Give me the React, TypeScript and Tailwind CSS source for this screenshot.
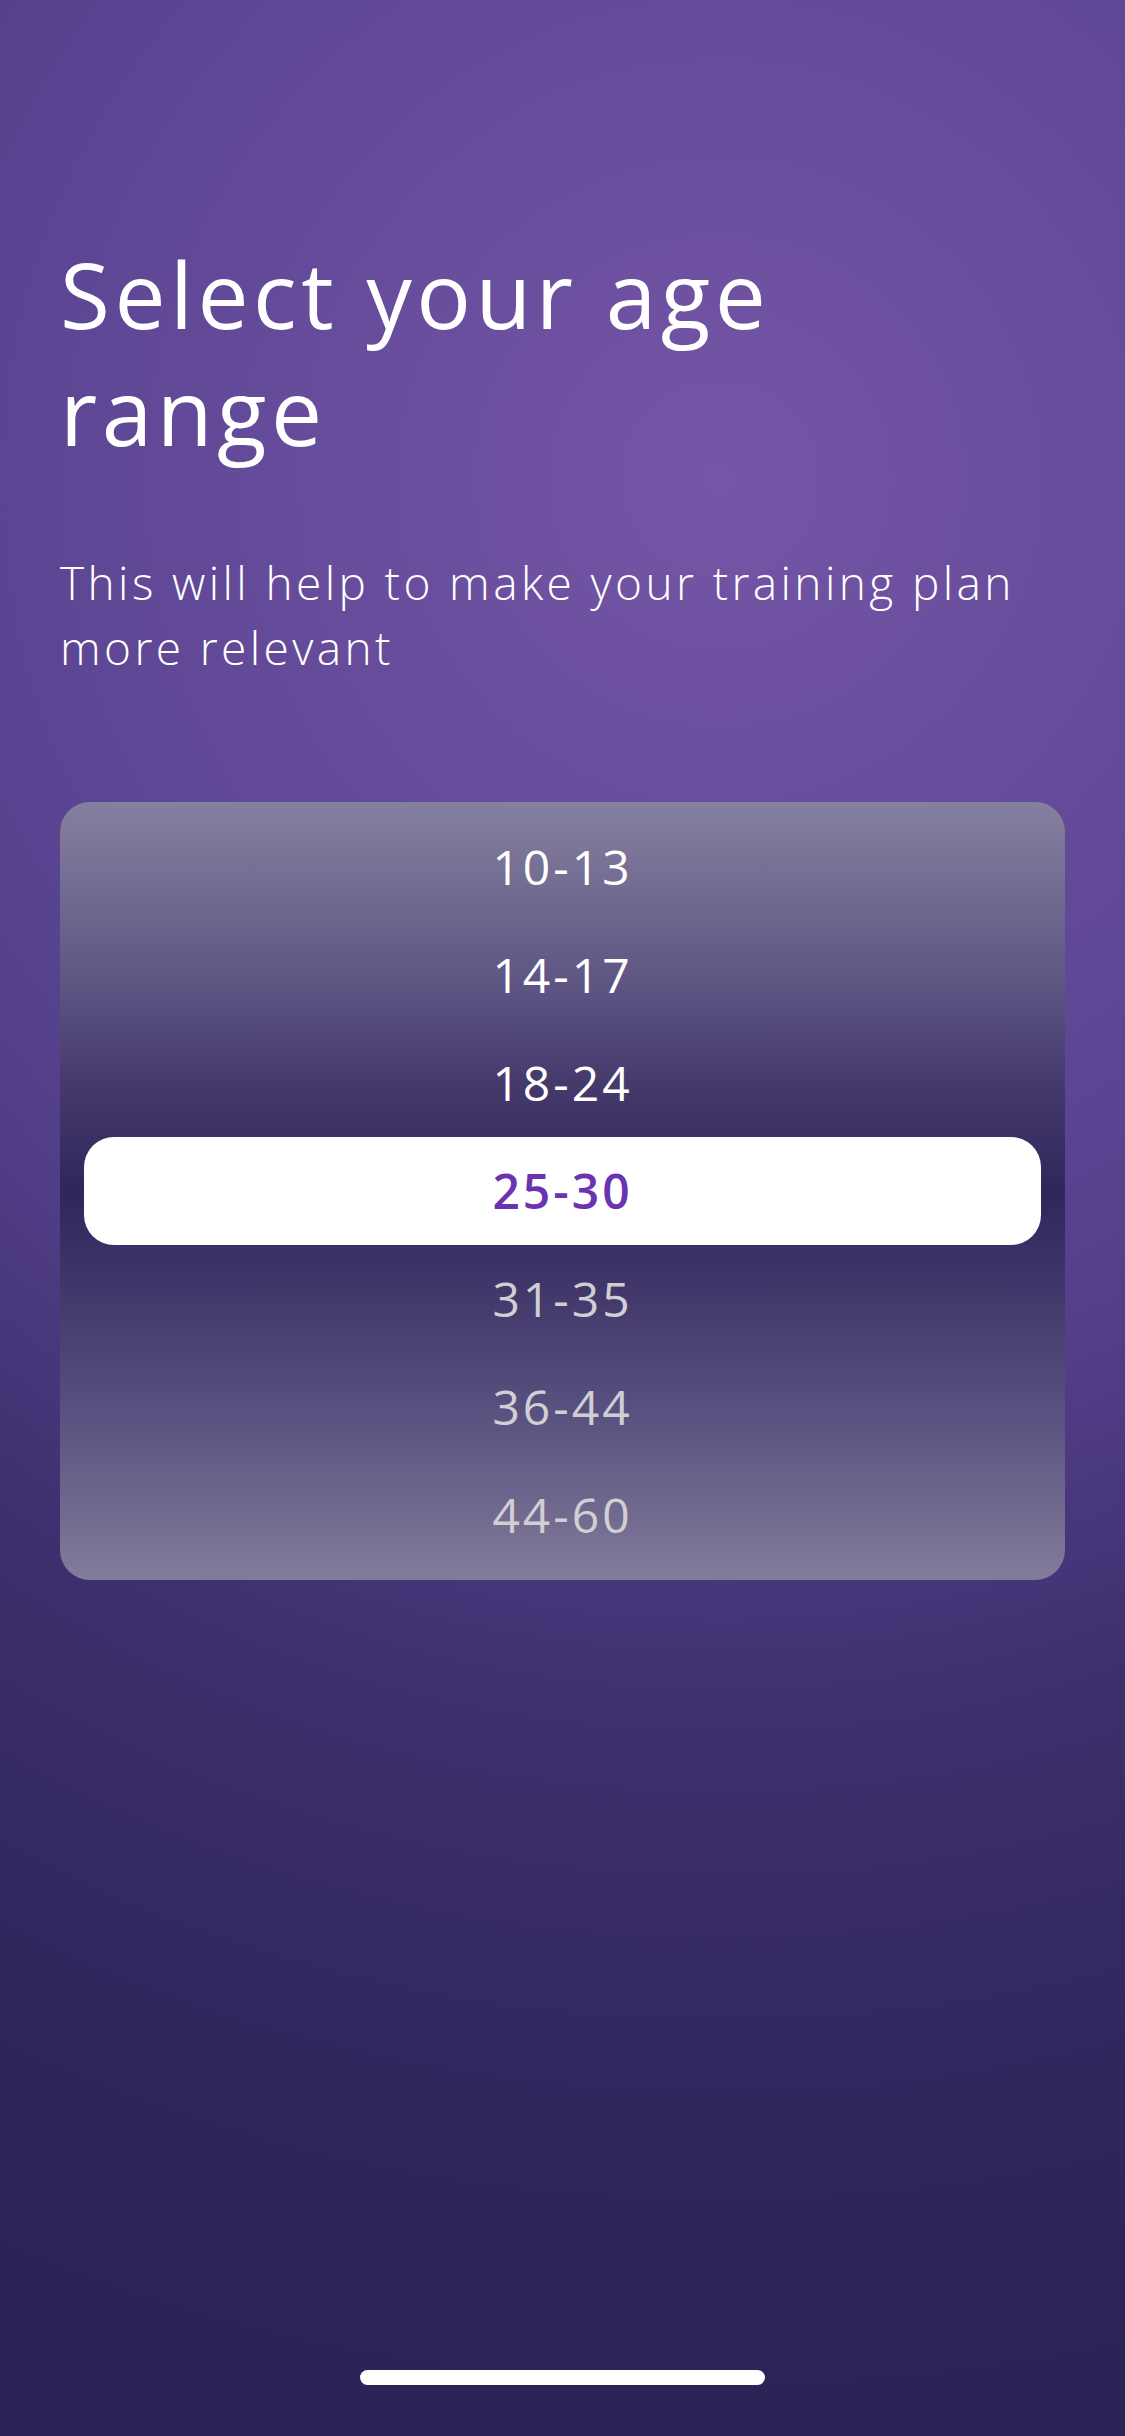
import React from 'react'

const ranges = ['10-13', '14-17', '18-24', '25-30', '31-35', '36-44', '44-60']

const AgeRangePicker = ({ selected }: { selected: number }) => {
  return (
    <div className="rounded-[30px] px-[24px] py-[11px] bg-[linear-gradient(to_bottom,#86809f_0%,#5b5281_25%,#463a6c_36%,#3a2f62_44%,#30265a_50%,#3d3266_59%,#44396b_64%,#58507e_78%,#726b8f_92%,#827c9c_100%)]">
      {ranges.map((range, index) => (
        <div
          key={range}
          className={`flex h-[108px] items-center justify-center rounded-[30px] text-[48px] leading-none tracking-[3px] ${
            index === selected
              ? 'bg-white font-semibold text-[#6a34b0]'
              : index < selected
                ? 'font-normal text-white'
                : 'font-normal text-[#d0cfd4]'
          }`}
        >
          {range}
        </div>
      ))}
    </div>
  )
}

const App = () => {
  return (
    <div
      className="flex min-h-[2436px] w-full flex-col bg-[radial-gradient(circle_at_720px_480px,#7555a6_0px,#5c4694_700px,#523e88_950px,#3e2f6e_1250px,#30265c_1650px,#2b2255_2000px)] text-white"
      style={{ fontFamily: '"Open Sans", "Noto Sans", sans-serif' }}
    >
      <div className="px-[60px] pt-[236px]">
        <h1 className="text-[91px] font-normal leading-[117px] tracking-[4.5px]">
          Select your age
          <br />
          range
        </h1>
        <p className="mt-[80px] text-[46px] font-light leading-[65px] tracking-[3.4px]">
          This will help to make your training plan more relevant
        </p>
        <div className="mt-[122px]">
          <AgeRangePicker selected={3} />
        </div>
      </div>
      <div className="flex-1" />
      <div className="flex justify-center pb-[51px]">
        <div className="h-[15px] w-[405px] rounded-full bg-white" />
      </div>
    </div>
  )
}

export default App
